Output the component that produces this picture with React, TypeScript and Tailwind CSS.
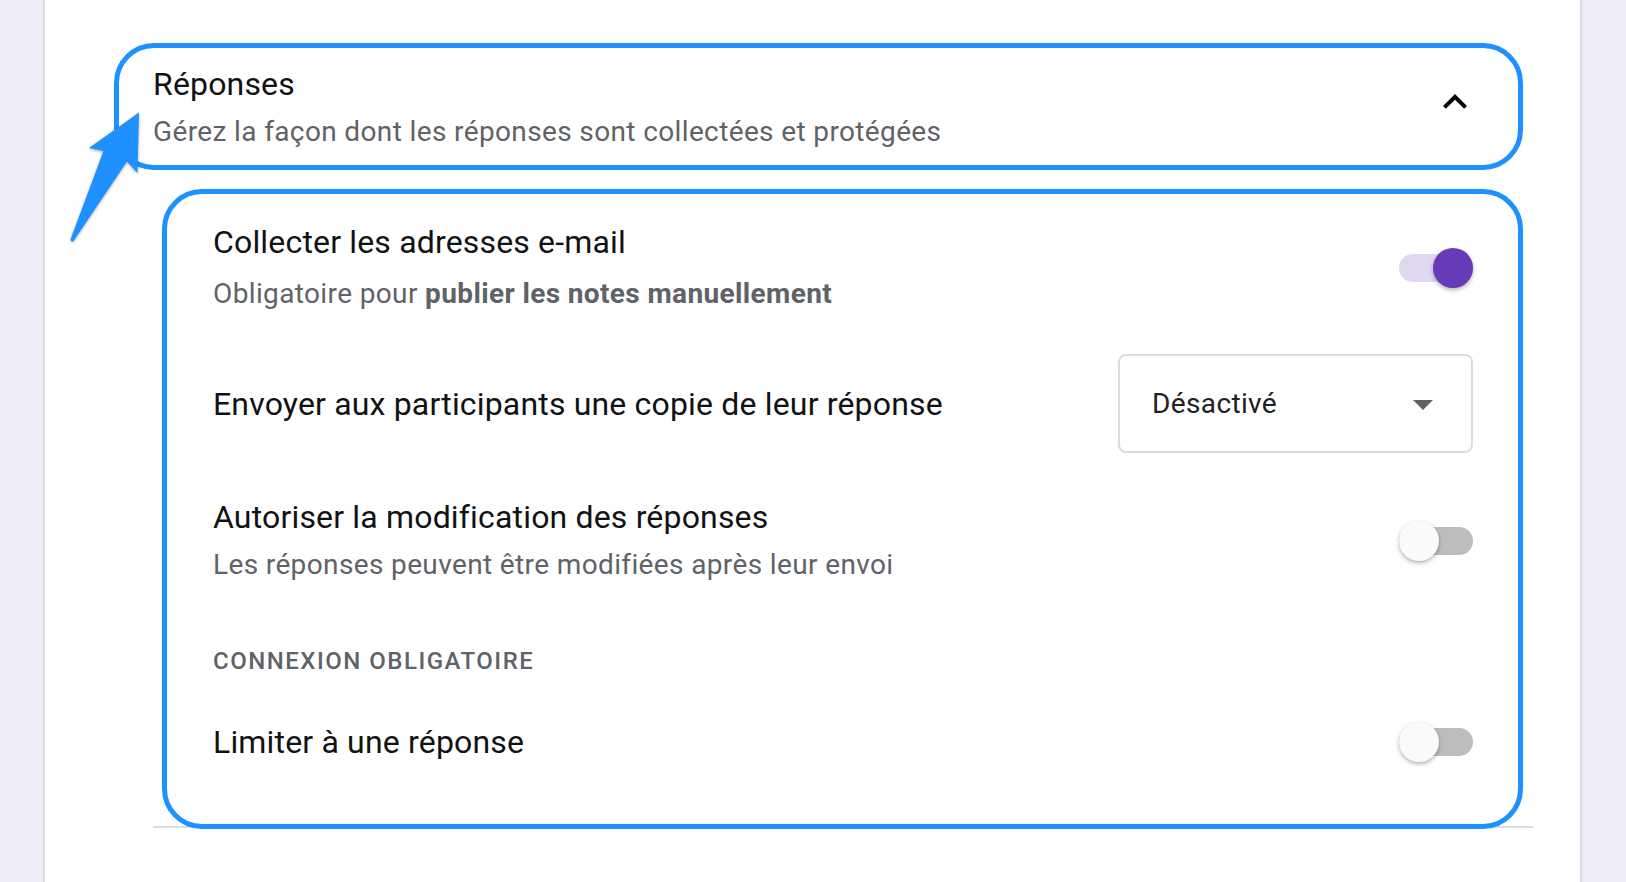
import React from 'react';

interface IToggleProps {
  on?: boolean;
}

const Toggle = ({ on = false }: IToggleProps) => (
  <div className="relative h-[40px] w-[74px] shrink-0">
    <div className={`absolute left-0 right-0 top-[6px] h-[28px] rounded-full ${on ? 'bg-[#e0d8f0]' : 'bg-[#bdbdbd]'}`} />
    <div
      className={`absolute top-0 h-[40px] w-[40px] rounded-full shadow-[0_2px_4px_rgba(0,0,0,0.3)] ${
        on ? 'right-0 bg-[#673ab7]' : 'left-0 bg-[#fafafa]'
      }`}
    />
  </div>
);

const ChevronUp = () => (
  <svg width="48" height="48" viewBox="0 0 24 24" className="shrink-0">
    <path d="M12 8l-6 6 1.41 1.41L12 10.83l4.59 4.58L18 14z" fill="#000" />
  </svg>
);

const ArrowDrop = () => (
  <svg width="48" height="48" viewBox="0 0 24 24" className="shrink-0">
    <path d="M7 10l5 5 5-5z" fill="#5f6368" />
  </svg>
);

// annotation arrow drawn over the header box
const Pointer = () => (
  <svg
    width="160"
    height="260"
    viewBox="0 0 160 260"
    className="pointer-events-none absolute left-0 top-0 z-20 drop-shadow-[0_1px_1.5px_rgba(0,0,0,0.35)]"
  >
    <path
      d="M70.5 239.5 L103.5 151 L89 148 L139 112.5 L137.5 173 L127 161.5 L73.5 241 Q71.5 242.5 70.5 239.5 Z"
      fill="#1e90ff"
    />
  </svg>
);

interface ISettingRowProps {
  title: string;
  children?: React.ReactNode;
  right: React.ReactNode;
  subGap?: string;
}

const SettingRow = ({ title, children, right, subGap = 'mt-2' }: ISettingRowProps) => (
  <div className="flex items-center justify-between">
    <div>
      <p className="text-[32px] leading-[40px] tracking-[0.17px] text-[#111213]">{title}</p>
      {children && <p className={`${subGap} text-[28px] leading-[40px] tracking-[0.37px] text-[#5f6368]`}>{children}</p>}
    </div>
    {right}
  </div>
);

const App = () => {
  return (
    <div className="relative flex h-[882px] w-full overflow-hidden bg-[#eeeaf7] font-[Roboto,sans-serif]">
      <Pointer />
      <div className="w-[43px] shrink-0" />
      <div className="flex flex-1 flex-col border-x-2 border-[#dcdbe2] bg-white pt-[43px]">
        {/* header */}
        <div className="ml-[69px] mr-[57px] flex h-[127px] items-start justify-between rounded-[40px] border-[5px] border-[#1e90ff] pl-[34px] pr-[39px] pt-[16px]">
          <div>
            <p className="text-[32px] leading-[40px] tracking-[0.17px] text-[#111213]">Réponses</p>
            <p className="mt-2 text-[28px] leading-[40px] tracking-[0.37px] text-[#5f6368]">
              Gérez la façon dont les réponses sont collectées et protégées
            </p>
          </div>
          <div className="mt-[14px]">
            <ChevronUp />
          </div>
        </div>

        {/* settings */}
        <div className="relative z-10 ml-[117px] mr-[57px] mt-[19px] rounded-[40px] border-[5px] border-[#1e90ff] pb-[62px] pl-[46px] pr-[45px] pt-[28px]">
          <SettingRow title="Collecter les adresses e-mail" right={<Toggle on />} subGap="mt-[12px]">
            Obligatoire pour <span className="font-bold">publier les notes manuellement</span>
          </SettingRow>

          <div className="mt-[40px] flex items-center justify-between">
            <p className="text-[32px] leading-[40px] tracking-[0.17px] text-[#111213]">
              Envoyer aux participants une copie de leur réponse
            </p>
            <div className="flex h-[99px] w-[355px] items-center justify-between rounded-[8px] border-2 border-[#dadce0] pl-[32px] pr-[24px]">
              <span className="text-[28px] tracking-[0.37px] text-[#202124]">Désactivé</span>
              <ArrowDrop />
            </div>
          </div>

          <div className="mt-[44px]">
            <SettingRow title="Autoriser la modification des réponses" right={<Toggle />}>
              Les réponses peuvent être modifiées après leur envoi
            </SettingRow>
          </div>

          <p className="mt-[60px] text-[24px] font-medium uppercase leading-[32px] tracking-[1.5px] text-[#5f6368]">
            Connexion obligatoire
          </p>

          <div className="mt-[45px] flex h-[40px] items-center justify-between">
            <p className="text-[32px] leading-[40px] tracking-[0.17px] text-[#111213]">Limiter à une réponse</p>
            <Toggle />
          </div>
        </div>
        <div className="-mt-[3px] ml-[108px] mr-[47px] h-[2px] bg-[#dadce0]" />
      </div>
      <div className="w-[44px] shrink-0" />
    </div>
  );
};

export default App;
